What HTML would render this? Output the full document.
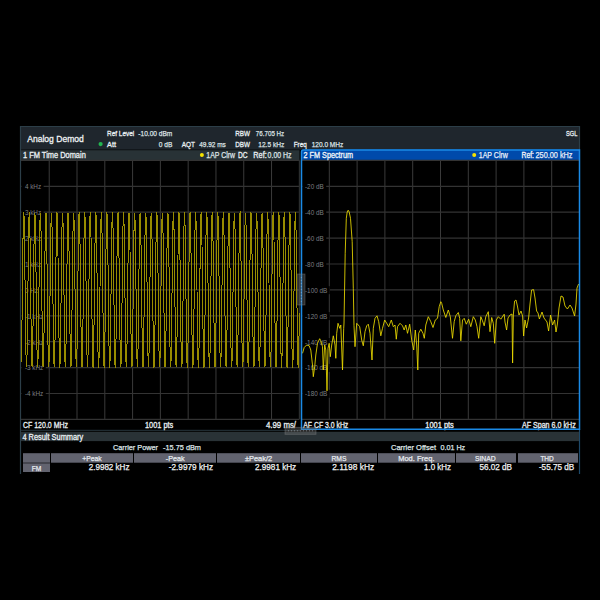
<!DOCTYPE html><html><head><meta charset="utf-8"><style>
html,body{margin:0;padding:0;background:#000;width:600px;height:600px;overflow:hidden}
body{position:relative;font-family:"Liberation Sans",sans-serif}
.t{position:absolute;white-space:pre;line-height:1;transform-origin:0 0}
svg{position:absolute;left:0;top:0}
text{font-family:"Liberation Sans",sans-serif}
</style></head><body>
<svg width="600" height="600" viewBox="0 0 600 600">
<rect x="20" y="126" width="560" height="348" fill="#000"/>
<rect x="20" y="126" width="560" height="23" fill="#1f262d"/>
<line x1="20" y1="126.5" x2="580" y2="126.5" stroke="#2c3e48" stroke-width="1"/>
<rect x="20" y="149" width="560" height="1.2" fill="#12171b"/>
<line x1="20.5" y1="126" x2="20.5" y2="474" stroke="#2c3e48" stroke-width="1.2"/>
<line x1="579.5" y1="126" x2="579.5" y2="150" stroke="#2c3e48" stroke-width="1.2"/>
<line x1="579.5" y1="429" x2="579.5" y2="474" stroke="#1d4868" stroke-width="1.2"/>
<rect x="21" y="150.2" width="278.5" height="9.8" fill="#283236"/>
<path d="M301 160 L301 152 Q301 149.5 303.5 149.5 L580 149.5 L580 160 Z" fill="#004aab"/>
<line x1="49.22" y1="160.4" x2="49.22" y2="419.4" stroke="#3a3a3a" stroke-width="1"/>
<line x1="77.01" y1="160.4" x2="77.01" y2="419.4" stroke="#3a3a3a" stroke-width="1"/>
<line x1="104.80" y1="160.4" x2="104.80" y2="419.4" stroke="#3a3a3a" stroke-width="1"/>
<line x1="132.59" y1="160.4" x2="132.59" y2="419.4" stroke="#3a3a3a" stroke-width="1"/>
<line x1="160.38" y1="160.4" x2="160.38" y2="419.4" stroke="#3a3a3a" stroke-width="1"/>
<line x1="188.17" y1="160.4" x2="188.17" y2="419.4" stroke="#3a3a3a" stroke-width="1"/>
<line x1="215.96" y1="160.4" x2="215.96" y2="419.4" stroke="#3a3a3a" stroke-width="1"/>
<line x1="243.75" y1="160.4" x2="243.75" y2="419.4" stroke="#3a3a3a" stroke-width="1"/>
<line x1="271.54" y1="160.4" x2="271.54" y2="419.4" stroke="#3a3a3a" stroke-width="1"/>
<line x1="329.30" y1="160.4" x2="329.30" y2="419.4" stroke="#3a3a3a" stroke-width="1"/>
<line x1="357.10" y1="160.4" x2="357.10" y2="419.4" stroke="#3a3a3a" stroke-width="1"/>
<line x1="384.90" y1="160.4" x2="384.90" y2="419.4" stroke="#3a3a3a" stroke-width="1"/>
<line x1="412.70" y1="160.4" x2="412.70" y2="419.4" stroke="#3a3a3a" stroke-width="1"/>
<line x1="440.50" y1="160.4" x2="440.50" y2="419.4" stroke="#3a3a3a" stroke-width="1"/>
<line x1="468.30" y1="160.4" x2="468.30" y2="419.4" stroke="#3a3a3a" stroke-width="1"/>
<line x1="496.10" y1="160.4" x2="496.10" y2="419.4" stroke="#3a3a3a" stroke-width="1"/>
<line x1="523.90" y1="160.4" x2="523.90" y2="419.4" stroke="#3a3a3a" stroke-width="1"/>
<line x1="551.70" y1="160.4" x2="551.70" y2="419.4" stroke="#3a3a3a" stroke-width="1"/>
<line x1="21" y1="160.40" x2="299.5" y2="160.40" stroke="#333" stroke-width="1.2"/>
<line x1="302" y1="160.40" x2="579" y2="160.40" stroke="#333" stroke-width="1.2"/>
<line x1="21" y1="186.30" x2="299.5" y2="186.30" stroke="#333" stroke-width="1.2"/>
<line x1="302" y1="186.30" x2="579" y2="186.30" stroke="#333" stroke-width="1.2"/>
<line x1="21" y1="212.20" x2="299.5" y2="212.20" stroke="#333" stroke-width="1.2"/>
<line x1="302" y1="212.20" x2="579" y2="212.20" stroke="#333" stroke-width="1.2"/>
<line x1="21" y1="238.10" x2="299.5" y2="238.10" stroke="#333" stroke-width="1.2"/>
<line x1="302" y1="238.10" x2="579" y2="238.10" stroke="#333" stroke-width="1.2"/>
<line x1="21" y1="264.00" x2="299.5" y2="264.00" stroke="#333" stroke-width="1.2"/>
<line x1="302" y1="264.00" x2="579" y2="264.00" stroke="#333" stroke-width="1.2"/>
<line x1="21" y1="289.90" x2="299.5" y2="289.90" stroke="#333" stroke-width="1.2"/>
<line x1="302" y1="289.90" x2="579" y2="289.90" stroke="#333" stroke-width="1.2"/>
<line x1="21" y1="315.80" x2="299.5" y2="315.80" stroke="#333" stroke-width="1.2"/>
<line x1="302" y1="315.80" x2="579" y2="315.80" stroke="#333" stroke-width="1.2"/>
<line x1="21" y1="341.70" x2="299.5" y2="341.70" stroke="#333" stroke-width="1.2"/>
<line x1="302" y1="341.70" x2="579" y2="341.70" stroke="#333" stroke-width="1.2"/>
<line x1="21" y1="367.60" x2="299.5" y2="367.60" stroke="#333" stroke-width="1.2"/>
<line x1="302" y1="367.60" x2="579" y2="367.60" stroke="#333" stroke-width="1.2"/>
<line x1="21" y1="393.50" x2="299.5" y2="393.50" stroke="#333" stroke-width="1.2"/>
<line x1="302" y1="393.50" x2="579" y2="393.50" stroke="#333" stroke-width="1.2"/>
<line x1="21" y1="419.40" x2="299.5" y2="419.40" stroke="#333" stroke-width="1.2"/>
<line x1="302" y1="419.40" x2="579" y2="419.40" stroke="#333" stroke-width="1.2"/>
<line x1="299.5" y1="160" x2="299.5" y2="419" stroke="#2a2d2e" stroke-width="1.4"/>
<rect x="21" y="431.8" width="558" height="9.3" fill="#293236"/>
<line x1="21" y1="430.4" x2="300" y2="430.4" stroke="#1f2b31" stroke-width="1.1"/>
<rect x="23" y="453.2" width="27" height="9.5" fill="#62636f"/>
<rect x="51" y="453.2" width="82" height="9.5" fill="#62636f"/>
<rect x="134" y="453.2" width="82" height="9.5" fill="#62636f"/>
<rect x="217" y="453.2" width="83" height="9.5" fill="#62636f"/>
<rect x="301" y="453.2" width="76" height="9.5" fill="#62636f"/>
<rect x="378" y="453.2" width="77" height="9.5" fill="#62636f"/>
<rect x="456" y="453.2" width="60" height="9.5" fill="#62636f"/>
<rect x="518" y="453.2" width="60" height="9.5" fill="#62636f"/>
<rect x="23" y="463.3" width="27" height="8.7" fill="#62636f"/>
</svg>
<svg width="600" height="600" viewBox="0 0 600 600">
<text x="27.25" y="141.90" font-size="9.57" fill="#f0f3f4" stroke="#f0f3f4" stroke-width="0.3" textLength="56.55" lengthAdjust="spacingAndGlyphs">Analog Demod</text>
<text x="107.00" y="135.70" font-size="8.11" fill="#eaf0f3" stroke="#eaf0f3" stroke-width="0.3" textLength="27.30" lengthAdjust="spacingAndGlyphs">Ref Level</text>
<text x="138.30" y="135.70" font-size="8.11" fill="#dfe4e6" stroke="#dfe4e6" stroke-width="0.25" textLength="34.00" lengthAdjust="spacingAndGlyphs">-10.00 dBm</text>
<text x="107.00" y="146.70" font-size="8.11" fill="#eaf0f3" stroke="#eaf0f3" stroke-width="0.3" textLength="9.00" lengthAdjust="spacingAndGlyphs">Att</text>
<text x="158.70" y="146.70" font-size="8.11" fill="#dfe4e6" stroke="#dfe4e6" stroke-width="0.25" textLength="13.60" lengthAdjust="spacingAndGlyphs">0 dB</text>
<text x="181.70" y="146.70" font-size="8.11" fill="#eaf0f3" stroke="#eaf0f3" stroke-width="0.3" textLength="13.30" lengthAdjust="spacingAndGlyphs">AQT</text>
<text x="199.20" y="146.70" font-size="8.11" fill="#dfe4e6" stroke="#dfe4e6" stroke-width="0.25" textLength="26.60" lengthAdjust="spacingAndGlyphs">49.92 ms</text>
<text x="235.30" y="135.70" font-size="8.11" fill="#eaf0f3" stroke="#eaf0f3" stroke-width="0.3" textLength="14.70" lengthAdjust="spacingAndGlyphs">RBW</text>
<text x="255.80" y="135.70" font-size="8.11" fill="#dfe4e6" stroke="#dfe4e6" stroke-width="0.25" textLength="28.40" lengthAdjust="spacingAndGlyphs">76.705 Hz</text>
<text x="235.30" y="146.70" font-size="8.11" fill="#eaf0f3" stroke="#eaf0f3" stroke-width="0.3" textLength="14.70" lengthAdjust="spacingAndGlyphs">DBW</text>
<text x="258.30" y="146.70" font-size="8.11" fill="#dfe4e6" stroke="#dfe4e6" stroke-width="0.25" textLength="25.90" lengthAdjust="spacingAndGlyphs">12.5 kHz</text>
<text x="293.70" y="146.70" font-size="8.11" fill="#eaf0f3" stroke="#eaf0f3" stroke-width="0.3" textLength="13.00" lengthAdjust="spacingAndGlyphs">Freq</text>
<text x="311.70" y="146.70" font-size="8.11" fill="#dfe4e6" stroke="#dfe4e6" stroke-width="0.25" textLength="31.60" lengthAdjust="spacingAndGlyphs">120.0 MHz</text>
<text x="566.00" y="135.70" font-size="7.59" fill="#eaf0f3" stroke="#eaf0f3" stroke-width="0.3" textLength="11.30" lengthAdjust="spacingAndGlyphs">SGL</text>
<text x="23.00" y="157.80" font-size="8.32" fill="#eaf0f3" stroke="#eaf0f3" stroke-width="0.3" textLength="62.80" lengthAdjust="spacingAndGlyphs">1 FM Time Domain</text>
<text x="206.30" y="157.80" font-size="8.32" fill="#dfe4e6" stroke="#dfe4e6" stroke-width="0.25" textLength="28.70" lengthAdjust="spacingAndGlyphs">1AP Clrw</text>
<text x="237.90" y="157.80" font-size="8.32" fill="#eaf0f3" stroke="#eaf0f3" stroke-width="0.3" textLength="9.60" lengthAdjust="spacingAndGlyphs">DC</text>
<text x="253.30" y="157.80" font-size="8.32" fill="#eaf0f3" stroke="#eaf0f3" stroke-width="0.3" textLength="13.40" lengthAdjust="spacingAndGlyphs">Ref:</text>
<text x="267.60" y="157.80" font-size="8.32" fill="#dfe4e6" stroke="#dfe4e6" stroke-width="0.25" textLength="24.00" lengthAdjust="spacingAndGlyphs">0.00 Hz</text>
<text x="303.50" y="157.80" font-size="8.32" fill="#f4f7fa" stroke="#f4f7fa" stroke-width="0.3" textLength="49.60" lengthAdjust="spacingAndGlyphs">2 FM Spectrum</text>
<text x="478.75" y="157.80" font-size="8.32" fill="#e8eef8" stroke="#e8eef8" stroke-width="0.25" textLength="29.15" lengthAdjust="spacingAndGlyphs">1AP Clrw</text>
<text x="521.50" y="157.80" font-size="8.32" fill="#f4f7fa" stroke="#f4f7fa" stroke-width="0.3" textLength="12.50" lengthAdjust="spacingAndGlyphs">Ref:</text>
<text x="535.50" y="157.80" font-size="8.32" fill="#e8eef8" stroke="#e8eef8" stroke-width="0.25" textLength="37.00" lengthAdjust="spacingAndGlyphs">250.00 kHz</text>
<rect x="21.50" y="182.60" width="22.13" height="8" fill="#000"/>
<text x="24.90" y="189.10" font-size="7.59" fill="#7c7f80" textLength="16.23" lengthAdjust="spacingAndGlyphs">4 kHz</text>
<rect x="21.50" y="208.50" width="22.13" height="8" fill="#000"/>
<text x="24.90" y="215.00" font-size="7.59" fill="#7c7f80" textLength="16.23" lengthAdjust="spacingAndGlyphs">3 kHz</text>
<rect x="21.50" y="234.40" width="22.13" height="8" fill="#000"/>
<text x="24.90" y="240.90" font-size="7.59" fill="#7c7f80" textLength="16.23" lengthAdjust="spacingAndGlyphs">2 kHz</text>
<rect x="21.50" y="260.30" width="22.13" height="8" fill="#000"/>
<text x="24.90" y="266.80" font-size="7.59" fill="#7c7f80" textLength="16.23" lengthAdjust="spacingAndGlyphs">1 kHz</text>
<rect x="21.50" y="286.20" width="18.96" height="8" fill="#000"/>
<text x="24.90" y="292.70" font-size="7.59" fill="#7c7f80" textLength="13.06" lengthAdjust="spacingAndGlyphs">0 Hz</text>
<rect x="21.50" y="312.10" width="24.25" height="8" fill="#000"/>
<text x="24.90" y="318.60" font-size="7.59" fill="#7c7f80" textLength="18.35" lengthAdjust="spacingAndGlyphs">-1 kHz</text>
<rect x="21.50" y="338.00" width="24.25" height="8" fill="#000"/>
<text x="24.90" y="344.50" font-size="7.59" fill="#7c7f80" textLength="18.35" lengthAdjust="spacingAndGlyphs">-2 kHz</text>
<rect x="21.50" y="363.90" width="24.25" height="8" fill="#000"/>
<text x="24.90" y="370.40" font-size="7.59" fill="#7c7f80" textLength="18.35" lengthAdjust="spacingAndGlyphs">-3 kHz</text>
<rect x="21.50" y="389.80" width="24.25" height="8" fill="#000"/>
<text x="24.90" y="396.30" font-size="7.59" fill="#7c7f80" textLength="18.35" lengthAdjust="spacingAndGlyphs">-4 kHz</text>
<rect x="302.30" y="182.60" width="23.91" height="8" fill="#000"/>
<text x="305.00" y="189.10" font-size="7.59" fill="#7c7f80" textLength="18.71" lengthAdjust="spacingAndGlyphs">-20 dB</text>
<rect x="302.30" y="208.50" width="23.91" height="8" fill="#000"/>
<text x="305.00" y="215.00" font-size="7.59" fill="#7c7f80" textLength="18.71" lengthAdjust="spacingAndGlyphs">-40 dB</text>
<rect x="302.30" y="234.40" width="23.91" height="8" fill="#000"/>
<text x="305.00" y="240.90" font-size="7.59" fill="#7c7f80" textLength="18.71" lengthAdjust="spacingAndGlyphs">-60 dB</text>
<rect x="302.30" y="260.30" width="23.91" height="8" fill="#000"/>
<text x="305.00" y="266.80" font-size="7.59" fill="#7c7f80" textLength="18.71" lengthAdjust="spacingAndGlyphs">-80 dB</text>
<rect x="302.30" y="286.20" width="27.44" height="8" fill="#000"/>
<text x="305.00" y="292.70" font-size="7.59" fill="#7c7f80" textLength="22.24" lengthAdjust="spacingAndGlyphs">-100 dB</text>
<rect x="302.30" y="312.10" width="27.44" height="8" fill="#000"/>
<text x="305.00" y="318.60" font-size="7.59" fill="#7c7f80" textLength="22.24" lengthAdjust="spacingAndGlyphs">-120 dB</text>
<rect x="302.30" y="338.00" width="27.44" height="8" fill="#000"/>
<text x="305.00" y="344.50" font-size="7.59" fill="#7c7f80" textLength="22.24" lengthAdjust="spacingAndGlyphs">-140 dB</text>
<rect x="302.30" y="363.90" width="27.44" height="8" fill="#000"/>
<text x="305.00" y="370.40" font-size="7.59" fill="#7c7f80" textLength="22.24" lengthAdjust="spacingAndGlyphs">-160 dB</text>
<rect x="302.30" y="389.80" width="27.44" height="8" fill="#000"/>
<text x="305.00" y="396.30" font-size="7.59" fill="#7c7f80" textLength="22.24" lengthAdjust="spacingAndGlyphs">-180 dB</text>
<text x="23.00" y="428.00" font-size="8.32" fill="#eaf0f3" stroke="#eaf0f3" stroke-width="0.3" textLength="45.00" lengthAdjust="spacingAndGlyphs">CF 120.0 MHz</text>
<text x="145.00" y="428.00" font-size="8.32" fill="#eaf0f3" stroke="#eaf0f3" stroke-width="0.3" textLength="28.30" lengthAdjust="spacingAndGlyphs">1001 pts</text>
<text x="266.00" y="428.00" font-size="8.32" fill="#eaf0f3" stroke="#eaf0f3" stroke-width="0.3" textLength="30.00" lengthAdjust="spacingAndGlyphs">4.99 ms/</text>
<text x="303.30" y="428.00" font-size="8.32" fill="#eaf0f3" stroke="#eaf0f3" stroke-width="0.3" textLength="45.00" lengthAdjust="spacingAndGlyphs">AF CF 3.0 kHz</text>
<text x="425.30" y="428.00" font-size="8.32" fill="#eaf0f3" stroke="#eaf0f3" stroke-width="0.3" textLength="28.50" lengthAdjust="spacingAndGlyphs">1001 pts</text>
<text x="521.90" y="428.00" font-size="8.32" fill="#eaf0f3" stroke="#eaf0f3" stroke-width="0.3" textLength="53.80" lengthAdjust="spacingAndGlyphs">AF Span 6.0 kHz</text>
<text x="22.40" y="439.70" font-size="8.53" fill="#eaf0f3" stroke="#eaf0f3" stroke-width="0.3" textLength="60.90" lengthAdjust="spacingAndGlyphs">4 Result Summary</text>
<text x="113.00" y="449.80" font-size="7.80" fill="#dfe4e6" stroke="#dfe4e6" stroke-width="0.25" textLength="45.00" lengthAdjust="spacingAndGlyphs">Carrier Power</text>
<text x="163.00" y="449.80" font-size="7.80" fill="#dfe4e6" stroke="#dfe4e6" stroke-width="0.25" textLength="38.00" lengthAdjust="spacingAndGlyphs">-15.75 dBm</text>
<text x="391.00" y="449.80" font-size="7.80" fill="#dfe4e6" stroke="#dfe4e6" stroke-width="0.25" textLength="45.00" lengthAdjust="spacingAndGlyphs">Carrier Offset</text>
<text x="440.50" y="449.80" font-size="7.80" fill="#dfe4e6" stroke="#dfe4e6" stroke-width="0.25" textLength="24.70" lengthAdjust="spacingAndGlyphs">0.01 Hz</text>
</svg>
<svg width="600" height="600" viewBox="0 0 600 600">
<polyline fill="none" stroke="#988c00" stroke-width="1" shape-rendering="crispEdges" points="21.30,362.43 21.58,350.28 21.86,332.18 22.13,309.91 22.41,285.68 22.69,261.86 22.97,240.80 23.25,224.58 23.52,214.78 23.80,212.39 24.08,217.62 24.36,229.97 24.64,248.22 24.91,270.57 25.19,294.82 25.47,318.60 25.75,339.54 26.03,355.60 26.30,365.19 26.58,367.37 26.86,361.92 27.14,349.38 27.42,330.99 27.69,308.55 27.97,284.27 28.25,260.55 28.53,239.72 28.81,223.83 29.08,214.44 29.36,212.48 29.64,218.15 29.92,230.87 30.20,249.41 30.47,271.94 30.75,296.23 31.03,319.90 31.31,340.62 31.59,356.34 31.86,365.52 32.14,367.26 32.42,361.38 32.70,348.47 32.98,329.79 33.25,307.18 33.53,282.87 33.81,259.25 34.09,238.65 34.37,223.10 34.64,214.12 34.92,212.60 35.20,218.70 35.48,231.80 35.76,250.62 36.03,273.31 36.31,297.63 36.59,321.19 36.87,341.67 37.15,357.06 37.42,365.83 37.70,367.13 37.98,360.82 38.26,347.53 38.54,328.57 38.81,305.80 39.09,281.47 39.37,257.96 39.65,237.60 39.93,222.39 40.20,213.83 40.48,212.75 40.76,219.27 41.04,232.74 41.32,251.84 41.59,274.69 41.87,299.03 42.15,322.48 42.43,342.71 42.71,357.75 42.98,366.11 43.26,366.97 43.54,360.24 43.82,346.58 44.10,327.34 44.37,304.42 44.65,280.07 44.93,256.69 45.21,236.57 45.49,221.71 45.76,213.56 46.04,212.92 46.32,219.87 46.60,233.70 46.88,253.07 47.15,276.07 47.43,300.43 47.71,323.75 47.99,343.74 48.27,358.43 48.54,366.37 48.82,366.78 49.10,359.63 49.38,345.61 49.66,326.10 49.93,303.04 50.21,278.68 50.49,255.42 50.77,235.56 51.05,221.05 51.32,213.31 51.60,213.12 51.88,220.48 52.16,234.68 52.44,254.32 52.71,277.46 52.99,301.82 53.27,325.01 53.55,344.74 53.83,359.08 54.10,366.60 54.38,366.57 54.66,359.00 54.94,344.62 55.22,324.85 55.49,301.65 55.77,277.28 56.05,254.16 56.33,234.56 56.61,220.41 56.88,213.09 57.16,213.34 57.44,221.13 57.72,235.68 58.00,255.58 58.27,278.85 58.55,303.21 58.83,326.26 59.11,345.73 59.39,359.71 59.66,366.81 59.94,366.34 60.22,358.34 60.50,343.61 60.78,323.59 61.05,300.25 61.33,275.90 61.61,252.92 61.89,233.58 62.17,219.79 62.44,212.90 62.72,213.59 63.00,221.79 63.28,236.70 63.56,256.85 63.83,280.24 64.11,304.60 64.39,327.50 64.67,346.70 64.95,360.31 65.22,366.99 65.50,366.08 65.78,357.67 66.06,342.59 66.34,322.32 66.61,298.86 66.89,274.51 67.17,251.69 67.45,232.62 67.73,219.20 68.00,212.73 68.28,213.86 68.56,222.48 68.84,237.73 69.12,258.12 69.39,281.64 69.67,305.98 69.95,328.72 70.23,347.65 70.51,360.89 70.78,367.14 71.06,365.79 71.34,356.97 71.62,341.54 71.90,321.03 72.17,297.46 72.45,273.14 72.73,250.47 73.01,231.68 73.29,218.63 73.56,212.59 73.84,214.16 74.12,223.19 74.40,238.79 74.68,259.41 74.95,283.04 75.23,307.35 75.51,329.94 75.79,348.58 76.07,361.45 76.34,367.28 76.62,365.48 76.90,356.25 77.18,340.48 77.46,319.74 77.73,296.05 78.01,271.76 78.29,249.26 78.57,230.76 78.85,218.08 79.12,212.47 79.40,214.48 79.68,223.92 79.96,239.85 80.24,260.71 80.51,284.45 80.79,308.72 81.07,331.14 81.35,349.49 81.63,361.99 81.90,367.38 82.18,365.15 82.46,355.51 82.74,339.41 83.02,318.43 83.29,294.65 83.57,270.40 83.85,248.07 84.13,229.86 84.41,217.56 84.68,212.38 84.96,214.83 85.24,224.67 85.52,240.94 85.80,262.02 86.07,285.85 86.35,310.08 86.63,332.32 86.91,350.39 87.19,362.50 87.46,367.46 87.74,364.79 88.02,354.74 88.30,338.31 88.58,317.12 88.85,293.24 89.13,269.04 89.41,246.89 89.69,228.97 89.97,217.06 90.24,212.31 90.52,215.20 90.80,225.45 91.08,242.04 91.36,263.34 91.63,287.26 91.91,311.44 92.19,333.50 92.47,351.26 92.75,362.99 93.02,367.51 93.30,364.40 93.58,353.96 93.86,337.20 94.14,315.79 94.41,291.84 94.69,267.69 94.97,245.72 95.25,228.11 95.53,216.58 95.80,212.27 96.08,215.60 96.36,226.24 96.64,243.16 96.92,264.67 97.19,288.67 97.47,312.79 97.75,334.65 98.03,352.11 98.31,363.45 98.58,367.54 98.86,363.99 99.14,353.15 99.42,336.08 99.70,314.46 99.97,290.43 100.25,266.34 100.53,244.57 100.81,227.27 101.09,216.13 101.36,212.25 101.64,216.02 101.92,227.06 102.20,244.29 102.48,266.01 102.75,290.08 103.03,314.13 103.31,335.80 103.59,352.95 103.87,363.89 104.14,367.55 104.42,363.56 104.70,352.32 104.98,334.94 105.26,313.12 105.53,289.02 105.81,265.00 106.09,243.44 106.37,226.45 106.65,215.70 106.92,212.26 107.20,216.47 107.48,227.90 107.76,245.43 108.04,267.35 108.31,291.48 108.59,315.46 108.87,336.92 109.15,353.76 109.43,364.30 109.70,367.52 109.98,363.10 110.26,351.48 110.54,333.79 110.82,311.78 111.09,287.61 111.37,263.67 111.65,242.32 111.93,225.65 112.21,215.30 112.48,212.30 112.76,216.93 113.04,228.76 113.32,246.60 113.60,268.70 113.87,292.89 114.15,316.79 114.43,338.04 114.71,354.55 114.99,364.69 115.26,367.48 115.54,362.62 115.82,350.61 116.10,332.62 116.38,310.42 116.65,286.21 116.93,262.35 117.21,241.21 117.49,224.87 117.77,214.92 118.04,212.36 118.32,217.43 118.60,229.63 118.88,247.77 119.16,270.06 119.43,294.30 119.71,318.10 119.99,339.13 120.27,355.32 120.55,365.06 120.82,367.40 121.10,362.12 121.38,349.72 121.66,331.43 121.94,309.06 122.21,284.80 122.49,261.04 122.77,240.12 123.05,224.11 123.33,214.57 123.60,212.44 123.88,217.95 124.16,230.53 124.44,248.96 124.72,271.42 124.99,295.70 125.27,319.41 125.55,340.21 125.83,356.06 126.11,365.40 126.38,367.30 126.66,361.59 126.94,348.81 127.22,330.24 127.50,307.69 127.77,283.40 128.05,259.74 128.33,239.05 128.61,223.37 128.89,214.24 129.16,212.55 129.44,218.49 129.72,231.45 130.00,250.16 130.28,272.79 130.55,297.11 130.83,320.71 131.11,341.28 131.39,356.79 131.67,365.72 131.94,367.18 132.22,361.03 132.50,347.89 132.78,329.03 133.06,306.32 133.33,281.99 133.61,258.45 133.89,238.00 134.17,222.65 134.45,213.93 134.72,212.69 135.00,219.05 135.28,232.38 135.56,251.38 135.84,274.17 136.11,298.51 136.39,322.00 136.67,342.33 136.95,357.49 137.23,366.01 137.50,367.03 137.78,360.46 138.06,346.94 138.34,327.81 138.62,304.94 138.89,280.59 139.17,257.16 139.45,236.96 139.73,221.96 140.01,213.66 140.28,212.85 140.56,219.64 140.84,233.34 141.12,252.61 141.40,275.55 141.67,299.90 141.95,323.27 142.23,343.36 142.51,358.18 142.79,366.28 143.06,366.85 143.34,359.86 143.62,345.98 143.90,326.57 144.18,303.56 144.45,279.20 144.73,255.89 145.01,235.94 145.29,221.29 145.57,213.40 145.84,213.04 146.12,220.25 146.40,234.31 146.68,253.85 146.96,276.94 147.23,301.30 147.51,324.54 147.79,344.37 148.07,358.84 148.35,366.52 148.62,366.65 148.90,359.24 149.18,344.99 149.46,325.32 149.74,302.17 150.01,277.81 150.29,254.63 150.57,234.93 150.85,220.64 151.13,213.17 151.40,213.26 151.68,220.88 151.96,235.31 152.24,255.10 152.52,278.33 152.79,302.69 153.07,325.79 153.35,345.36 153.63,359.47 153.91,366.73 154.18,366.43 154.46,358.59 154.74,343.99 155.02,324.07 155.30,300.78 155.57,276.42 155.85,253.38 156.13,233.95 156.41,220.02 156.69,212.97 156.96,213.49 157.24,221.54 157.52,236.32 157.80,256.37 158.08,279.72 158.35,304.08 158.63,327.04 158.91,346.34 159.19,360.09 159.47,366.92 159.74,366.18 160.02,357.92 160.30,342.97 160.58,322.80 160.86,299.38 161.13,275.03 161.41,252.15 161.69,232.98 161.97,219.42 162.25,212.79 162.52,213.76 162.80,222.22 163.08,237.34 163.36,257.64 163.64,281.12 163.91,305.46 164.19,328.27 164.47,347.30 164.75,360.68 165.03,367.09 165.30,365.90 165.58,357.23 165.86,341.94 166.14,321.51 166.42,297.98 166.69,273.65 166.97,250.92 167.25,232.03 167.53,218.84 167.81,212.64 168.08,214.05 168.36,222.92 168.64,238.39 168.92,258.93 169.20,282.52 169.47,306.83 169.75,329.48 170.03,348.24 170.31,361.24 170.59,367.23 170.86,365.60 171.14,356.52 171.42,340.88 171.70,320.22 171.98,296.58 172.25,272.28 172.53,249.71 172.81,231.10 173.09,218.28 173.37,212.51 173.64,214.36 173.92,223.64 174.20,239.45 174.48,260.23 174.76,283.92 175.03,308.21 175.31,330.69 175.59,349.16 175.87,361.79 176.15,367.34 176.42,365.28 176.70,355.79 176.98,339.81 177.26,318.92 177.54,295.18 177.81,270.91 178.09,248.51 178.37,230.19 178.65,217.75 178.93,212.41 179.20,214.70 179.48,224.39 179.76,240.53 180.04,261.53 180.32,285.33 180.59,309.57 180.87,331.88 181.15,350.06 181.43,362.31 181.71,367.43 181.98,364.93 182.26,355.03 182.54,338.72 182.82,317.61 183.10,293.77 183.37,269.55 183.65,247.33 183.93,229.30 184.21,217.24 184.49,212.33 184.76,215.06 185.04,225.16 185.32,241.62 185.60,262.85 185.88,286.73 186.15,310.93 186.43,333.06 186.71,350.94 186.99,362.81 187.27,367.50 187.54,364.55 187.82,354.25 188.10,337.62 188.38,316.29 188.66,292.36 188.93,268.19 189.21,246.16 189.49,228.43 189.77,216.76 190.05,212.28 190.32,215.45 190.60,225.94 190.88,242.74 191.16,264.17 191.44,288.14 191.71,312.28 191.99,334.22 192.27,351.80 192.55,363.28 192.83,367.54 193.10,364.15 193.38,353.46 193.66,336.50 193.94,314.96 194.22,290.96 194.49,266.84 194.77,245.00 195.05,227.58 195.33,216.30 195.61,212.25 195.88,215.86 196.16,226.75 196.44,243.86 196.72,265.50 197.00,289.55 197.27,313.63 197.55,335.37 197.83,352.64 198.11,363.73 198.39,367.55 198.66,363.73 198.94,352.64 199.22,335.37 199.50,313.63 199.78,289.55 200.05,265.50 200.33,243.86 200.61,226.75 200.89,215.86 201.17,212.25 201.44,216.30 201.72,227.58 202.00,245.00 202.28,266.84 202.56,290.96 202.83,314.96 203.11,336.50 203.39,353.46 203.67,364.15 203.95,367.54 204.22,363.28 204.50,351.80 204.78,334.22 205.06,312.28 205.34,288.14 205.61,264.17 205.89,242.74 206.17,225.94 206.45,215.45 206.73,212.28 207.00,216.76 207.28,228.43 207.56,246.16 207.84,268.19 208.12,292.36 208.39,316.29 208.67,337.62 208.95,354.25 209.23,364.55 209.51,367.50 209.78,362.81 210.06,350.94 210.34,333.06 210.62,310.93 210.90,286.73 211.17,262.85 211.45,241.62 211.73,225.16 212.01,215.06 212.29,212.33 212.56,217.24 212.84,229.30 213.12,247.33 213.40,269.55 213.68,293.77 213.95,317.61 214.23,338.72 214.51,355.03 214.79,364.93 215.07,367.43 215.34,362.31 215.62,350.06 215.90,331.88 216.18,309.57 216.46,285.33 216.73,261.53 217.01,240.53 217.29,224.39 217.57,214.70 217.85,212.41 218.12,217.75 218.40,230.19 218.68,248.51 218.96,270.91 219.24,295.18 219.51,318.92 219.79,339.81 220.07,355.79 220.35,365.28 220.63,367.34 220.90,361.79 221.18,349.16 221.46,330.69 221.74,308.21 222.02,283.92 222.29,260.23 222.57,239.45 222.85,223.64 223.13,214.36 223.41,212.51 223.68,218.28 223.96,231.10 224.24,249.71 224.52,272.28 224.80,296.58 225.07,320.22 225.35,340.88 225.63,356.52 225.91,365.60 226.19,367.23 226.46,361.24 226.74,348.24 227.02,329.48 227.30,306.83 227.58,282.52 227.85,258.93 228.13,238.39 228.41,222.92 228.69,214.05 228.97,212.64 229.24,218.84 229.52,232.03 229.80,250.92 230.08,273.65 230.36,297.98 230.63,321.51 230.91,341.94 231.19,357.23 231.47,365.90 231.75,367.09 232.02,360.68 232.30,347.30 232.58,328.27 232.86,305.46 233.14,281.12 233.41,257.64 233.69,237.34 233.97,222.22 234.25,213.76 234.53,212.79 234.80,219.42 235.08,232.98 235.36,252.15 235.64,275.03 235.92,299.38 236.19,322.80 236.47,342.97 236.75,357.92 237.03,366.18 237.31,366.92 237.58,360.09 237.86,346.34 238.14,327.04 238.42,304.08 238.70,279.72 238.97,256.37 239.25,236.32 239.53,221.54 239.81,213.49 240.09,212.97 240.36,220.02 240.64,233.95 240.92,253.38 241.20,276.42 241.48,300.78 241.75,324.07 242.03,343.99 242.31,358.59 242.59,366.43 242.87,366.73 243.14,359.47 243.42,345.36 243.70,325.79 243.98,302.69 244.26,278.33 244.53,255.10 244.81,235.31 245.09,220.88 245.37,213.26 245.65,213.17 245.92,220.64 246.20,234.93 246.48,254.63 246.76,277.81 247.04,302.17 247.31,325.32 247.59,344.99 247.87,359.24 248.15,366.65 248.43,366.52 248.70,358.84 248.98,344.37 249.26,324.54 249.54,301.30 249.82,276.94 250.09,253.85 250.37,234.31 250.65,220.25 250.93,213.04 251.21,213.40 251.48,221.29 251.76,235.94 252.04,255.89 252.32,279.20 252.60,303.56 252.87,326.57 253.15,345.98 253.43,359.86 253.71,366.85 253.99,366.28 254.26,358.18 254.54,343.36 254.82,323.27 255.10,299.90 255.38,275.55 255.65,252.61 255.93,233.34 256.21,219.64 256.49,212.85 256.77,213.66 257.04,221.96 257.32,236.96 257.60,257.16 257.88,280.59 258.16,304.94 258.43,327.81 258.71,346.94 258.99,360.46 259.27,367.03 259.55,366.01 259.82,357.49 260.10,342.33 260.38,322.00 260.66,298.51 260.94,274.17 261.21,251.38 261.49,232.38 261.77,219.05 262.05,212.69 262.33,213.93 262.60,222.65 262.88,238.00 263.16,258.45 263.44,281.99 263.72,306.32 263.99,329.03 264.27,347.89 264.55,361.03 264.83,367.18 265.11,365.72 265.38,356.79 265.66,341.28 265.94,320.71 266.22,297.11 266.50,272.79 266.77,250.16 267.05,231.45 267.33,218.49 267.61,212.55 267.89,214.24 268.16,223.37 268.44,239.05 268.72,259.74 269.00,283.40 269.28,307.69 269.55,330.24 269.83,348.81 270.11,361.59 270.39,367.30 270.67,365.40 270.94,356.06 271.22,340.21 271.50,319.41 271.78,295.70 272.06,271.42 272.33,248.96 272.61,230.53 272.89,217.95 273.17,212.44 273.45,214.57 273.72,224.11 274.00,240.12 274.28,261.04 274.56,284.80 274.84,309.06 275.11,331.43 275.39,349.72 275.67,362.12 275.95,367.40 276.23,365.06 276.50,355.32 276.78,339.13 277.06,318.10 277.34,294.30 277.62,270.06 277.89,247.77 278.17,229.63 278.45,217.43 278.73,212.36 279.01,214.92 279.28,224.87 279.56,241.21 279.84,262.35 280.12,286.21 280.40,310.42 280.67,332.62 280.95,350.61 281.23,362.62 281.51,367.48 281.79,364.69 282.06,354.55 282.34,338.04 282.62,316.79 282.90,292.89 283.18,268.70 283.45,246.60 283.73,228.76 284.01,216.93 284.29,212.30 284.57,215.30 284.84,225.65 285.12,242.32 285.40,263.67 285.68,287.61 285.96,311.78 286.23,333.79 286.51,351.48 286.79,363.10 287.07,367.52 287.35,364.30 287.62,353.76 287.90,336.92 288.18,315.46 288.46,291.48 288.74,267.35 289.01,245.43 289.29,227.90 289.57,216.47 289.85,212.26 290.13,215.70 290.40,226.45 290.68,243.44 290.96,265.00 291.24,289.02 291.52,313.12 291.79,334.94 292.07,352.32 292.35,363.56 292.63,367.55 292.91,363.89 293.18,352.95 293.46,335.80 293.74,314.13 294.02,290.08 294.30,266.01 294.57,244.29 294.85,227.06 295.13,216.02 295.41,212.25 295.69,216.13 295.96,227.27 296.24,244.57 296.52,266.34 296.80,290.43 297.08,314.46 297.35,336.08 297.63,353.15 297.91,363.99 298.19,367.54 298.47,363.45 298.74,352.11 299.02,334.65 299.30,312.79"/>
<polyline fill="none" stroke="#ecdc00" stroke-width="0.85" stroke-linejoin="round" points="302.5,353.3 304.2,347.5 306.7,345 309.2,345.8 310.8,350 312.5,365 313.3,376.7 314.7,366.7 315.8,355 317.5,343.3 319.7,338.7 320.8,340.8 322.5,346.7 323.3,370 324.7,345 325.8,350 327,390.8 328,348.3 329.2,343.3 330.3,356.7 331.7,345 333.3,335.8 335,345 335.8,358.3 336.7,333.3 338,323.3 339.7,328.3 340.8,325 342.5,370 343.7,328.3 344,323 345.2,253.3 346.3,218.3 347.2,212 348.2,210.2 349.2,212 350.5,218.3 352.2,241.7 353.3,288.3 354,325.7 355,346.7 356.7,323.3 358.3,325 359.7,326.7 361.7,340 363.3,345.8 365,331.7 366.7,325.8 368.3,324.2 370,333.3 372,360 373.3,328.3 375,318.3 377,315.8 378.7,321.7 380.8,335.8 382.5,328.3 384.7,320 386.7,323.3 388.7,326.7 391.3,320 393.3,326.7 395,325 396.3,339.2 397.5,326.7 400,323.3 402.5,325.8 404.2,330 405.8,325 407.5,333.3 409.7,324.2 411.7,340 413.7,350 415.3,330 416.7,345 417.8,370 418.7,333.3 420.8,329.2 423,333.3 424.3,338.3 425.8,325 428.3,316.7 430.8,321.7 433,327.5 435.3,320 437.5,318.3 439.2,306.7 440.8,301.7 441.7,303.3 443.3,310 445.8,317.5 448.3,310 450.3,316.7 452.5,338.3 454.2,321.7 455.8,315.8 458.3,312.5 459.7,318.3 460.8,340.8 462.5,320 464.2,318.3 466.3,324.2 468.7,319.2 470.8,326.7 473.3,316.7 475.3,320 477,326.7 478.7,338.3 480.8,316.7 482.5,320.8 484.2,325.8 485.8,316.7 488.3,311.7 490,331.7 491.7,317.5 493.3,323.3 494.7,343.3 496.3,320 498.3,316.7 500.8,319.2 504.2,314.2 505,322 506.6,330 508,318 510,315 512,314 512.6,363 513.4,314 514.6,301 516,300 517.4,306 519,315 521,311 522.6,316 523.6,336 525,320 526.6,328 528.6,318 530,304 531.6,290 533.6,289.6 535,298 536.6,311 538,313 539.4,319 542,312 544,318 547,322 548.6,331 550.6,315 552.6,325 554.6,320 556,332 557.4,324 559,308 561,296 563,297 565,306 567.4,309 570,305 572,308 574.6,316 576,304 577,288 578.6,284"/>
<path d="M301.5 429.3 L301.5 152 Q301.5 150 303.5 150 L579.5 150 L579.5 429.3 Z" fill="none" stroke="#1a8ae6" stroke-width="1.5"/>
<rect x="297.5" y="274" width="7.5" height="31" fill="rgba(120,120,120,0.35)" stroke="rgba(150,150,150,0.4)" stroke-width="0.8"/>
<rect x="285" y="427.3" width="31" height="7" fill="rgba(120,120,120,0.35)" stroke="rgba(150,150,150,0.4)" stroke-width="0.8"/>
<line x1="288" y1="430.8" x2="314" y2="430.8" stroke="rgba(200,210,220,0.55)" stroke-width="0.8" stroke-dasharray="1 2"/>
<line x1="301.3" y1="277" x2="301.3" y2="303" stroke="rgba(200,220,240,0.5)" stroke-width="0.8" stroke-dasharray="1 2"/>
<circle cx="100.6" cy="144.1" r="2.1" fill="#22b550"/>
<circle cx="201.9" cy="155" r="2" fill="#f5e400"/>
<circle cx="474.2" cy="155" r="2" fill="#f5e400"/>
</svg>
<svg width="600" height="600" viewBox="0 0 600 600">
<text x="82.2" y="461" font-size="7.8" fill="#e8ecef" stroke="#e8ecef" stroke-width="0.25" textLength="19.50" lengthAdjust="spacingAndGlyphs">+Peak</text>
<text x="165.8" y="461" font-size="7.8" fill="#e8ecef" stroke="#e8ecef" stroke-width="0.25" textLength="18.90" lengthAdjust="spacingAndGlyphs">-Peak</text>
<text x="244.9" y="461" font-size="7.8" fill="#e8ecef" stroke="#e8ecef" stroke-width="0.25" textLength="27.30" lengthAdjust="spacingAndGlyphs">±Peak/2</text>
<text x="331.5" y="461" font-size="7.8" fill="#e8ecef" stroke="#e8ecef" stroke-width="0.25" textLength="15.00" lengthAdjust="spacingAndGlyphs">RMS</text>
<text x="398.2" y="461" font-size="7.8" fill="#e8ecef" stroke="#e8ecef" stroke-width="0.25" textLength="36.30" lengthAdjust="spacingAndGlyphs">Mod. Freq.</text>
<text x="474.9" y="461" font-size="7.8" fill="#e8ecef" stroke="#e8ecef" stroke-width="0.25" textLength="20.90" lengthAdjust="spacingAndGlyphs">SINAD</text>
<text x="540.4" y="461" font-size="7.8" fill="#e8ecef" stroke="#e8ecef" stroke-width="0.25" textLength="13.40" lengthAdjust="spacingAndGlyphs">THD</text>
<text x="88.7" y="470" font-size="8.4" fill="#f0f2f3" stroke="#f0f2f3" stroke-width="0.25" textLength="40.80" lengthAdjust="spacingAndGlyphs">2.9982 kHz</text>
<text x="168.8" y="470" font-size="8.4" fill="#f0f2f3" stroke="#f0f2f3" stroke-width="0.25" textLength="44.20" lengthAdjust="spacingAndGlyphs">-2.9979 kHz</text>
<text x="255" y="470" font-size="8.4" fill="#f0f2f3" stroke="#f0f2f3" stroke-width="0.25" textLength="41.20" lengthAdjust="spacingAndGlyphs">2.9981 kHz</text>
<text x="332.2" y="470" font-size="8.4" fill="#f0f2f3" stroke="#f0f2f3" stroke-width="0.25" textLength="42.00" lengthAdjust="spacingAndGlyphs">2.1198 kHz</text>
<text x="424" y="470" font-size="8.4" fill="#f0f2f3" stroke="#f0f2f3" stroke-width="0.25" textLength="27.00" lengthAdjust="spacingAndGlyphs">1.0 kHz</text>
<text x="479.4" y="470" font-size="8.4" fill="#f0f2f3" stroke="#f0f2f3" stroke-width="0.25" textLength="32.60" lengthAdjust="spacingAndGlyphs">56.02 dB</text>
<text x="538.9" y="470" font-size="8.4" fill="#f0f2f3" stroke="#f0f2f3" stroke-width="0.25" textLength="35.30" lengthAdjust="spacingAndGlyphs">-55.75 dB</text>
<text x="31.7" y="471" font-size="8" fill="#e8ecef" stroke="#e8ecef" stroke-width="0.25" textLength="9.55" lengthAdjust="spacingAndGlyphs">FM</text>
</svg>
</body></html>
